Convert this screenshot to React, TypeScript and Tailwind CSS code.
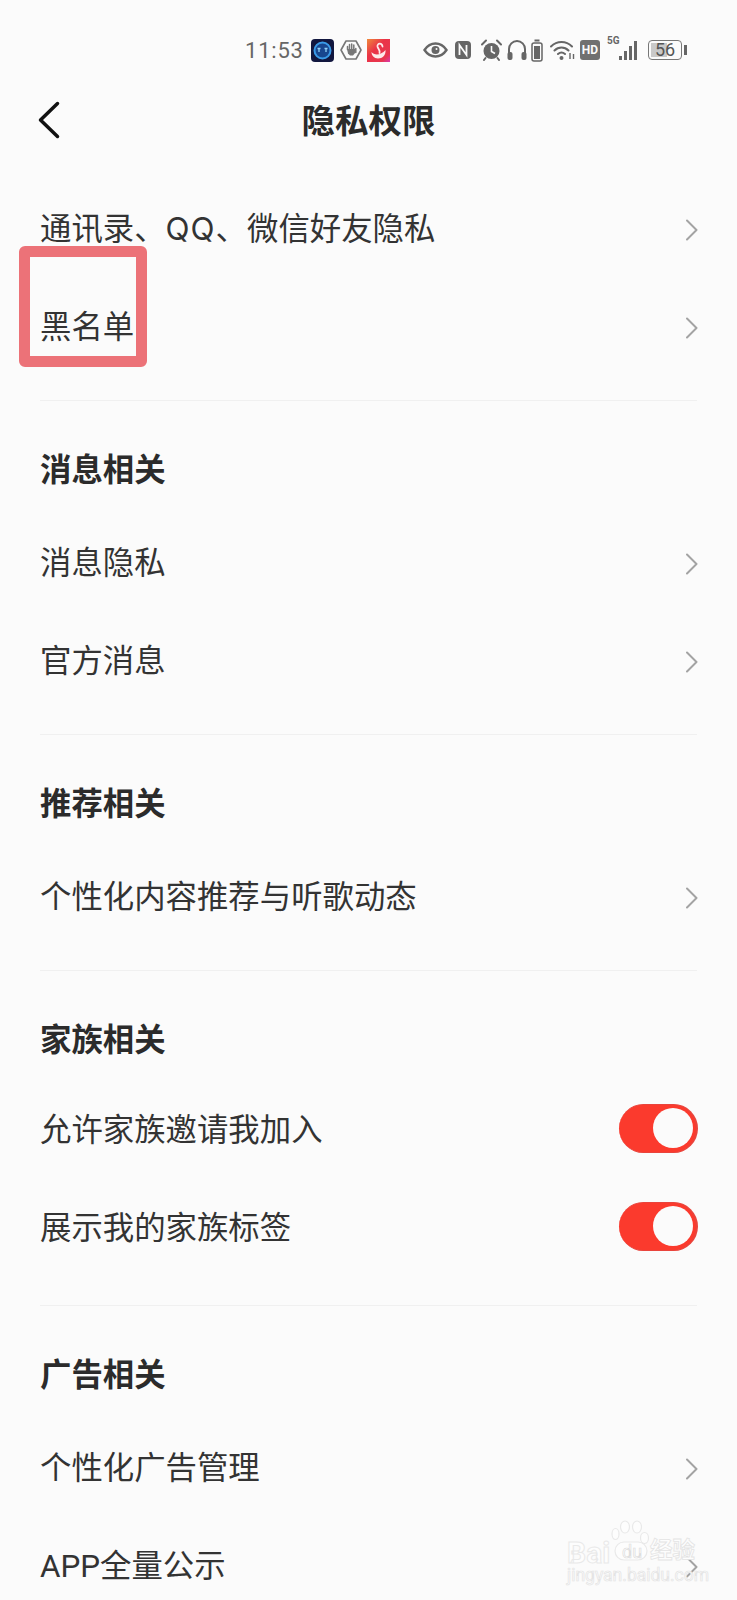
import React from 'react';

interface Row { label: string; toggle?: boolean; }
interface Section { title: string; compact?: boolean; rows: Row[]; }

const sections: Section[] = [
  { title: '', rows: [{ label: '通讯录、QQ、微信好友隐私' }, { label: '黑名单' }] },
  { title: '消息相关', rows: [{ label: '消息隐私' }, { label: '官方消息' }] },
  { title: '推荐相关', rows: [{ label: '个性化内容推荐与听歌动态' }] },
  { title: '家族相关', compact: true, rows: [{ label: '允许家族邀请我加入', toggle: true }, { label: '展示我的家族标签', toggle: true }] },
  { title: '广告相关', rows: [{ label: '个性化广告管理' }, { label: 'APP全量公示' }] },
];

function Chevron() {
  return (
    <svg width="12" height="22" viewBox="0 0 12 22" fill="none">
      <path d="M1 1.500 L10.500 11 L1 20.500" stroke="#a3a3a3" strokeWidth="2" strokeLinecap="round" strokeLinejoin="round" />
    </svg>
  );
}

function Toggle() {
  return (
    <div className="w-[79px] h-[49px] rounded-full bg-[#fb3a2d] border-r-[2px] border-y border-[#e9443c] flex items-center justify-end pr-[3px]">
      <div className="w-[40px] h-[40px] rounded-full bg-[#fbfbfb]" />
    </div>
  );
}

function RowLabel({ label }: { label: string }) {
  if (label.includes('QQ')) {
    const [before, after] = label.split('QQ');
    return (
      <>
        {before}
        <span className="tracking-[1px]" style={{ fontFamily: 'Inter, sans-serif' }}>QQ</span>
        {after}
      </>
    );
  }
  return <>{label}</>;
}

function StatusBar() {
  return (
    <div className="h-[78px] pl-[245px] pt-[22px] flex items-center text-[#666666]">
      <span className="text-[22px] tracking-[0.8px] w-[66px] leading-none mt-[1px]" style={{ fontFamily: 'Roboto, sans-serif' }}>11:53</span>
      {/* app icons */}
      <svg width="23" height="23" viewBox="0 0 23 23" className="mr-[6px]">
        <rect width="23" height="23" rx="4" fill="#12173f" />
        <circle cx="11.500" cy="11.500" r="8" fill="#18468f" stroke="#3a9ae8" strokeWidth="2" />
        <path d="M8 10v3M15 10v3M6.500 9.500h3M13.500 9.500h3" stroke="#8fd0f8" strokeWidth="1.300" />
      </svg>
      <svg width="22" height="22" viewBox="0 0 22 22" className="mr-[5px]">
        <path d="M6 2h10l5 9-5 9H6l-5-9z" fill="none" stroke="#777777" strokeWidth="1.600" strokeLinejoin="round" />
        <path d="M7.500 10.500V7.500M9.500 10V5.500M11.700 10V5M13.800 10V6M15.800 13.500V9.500" fill="none" stroke="#777777" strokeWidth="1.500" strokeLinecap="round" />
        <path d="M7 10h8.500v3.500L13 16.500h-3L8 14.500z" fill="#777777" />
      </svg>
      <svg width="23" height="23" viewBox="0 0 23 23" className="mr-[33px]">
        <defs>
          <linearGradient id="swan" x1="0" y1="0" x2="1" y2="1">
            <stop offset="0" stopColor="#ef8a3c" />
            <stop offset="0.4" stopColor="#ea3347" />
            <stop offset="0.8" stopColor="#e8364f" />
            <stop offset="1" stopColor="#d83bb0" />
          </linearGradient>
        </defs>
        <rect width="23" height="23" fill="url(#swan)" />
        <path d="M15.500 7.500C15 3.500 10 4 10.500 7.500C11 10 13.500 11 12.500 14" fill="none" stroke="#fdeaea" strokeWidth="1.800" strokeLinecap="round" />
        <path d="M4.500 13C7 16.500 14 16.500 18.500 11C19 16 15.500 19.500 11 19.500C7 19.500 4.500 16.500 4.500 13z" fill="#fdeaea" />
      </svg>
      {/* eye */}
      <svg width="25" height="18" viewBox="0 0 25 18" className="mr-[6px]">
        <path d="M1.500 9C4.500 4.500 8 2.500 12.500 2.500S20.500 4.500 23.500 9C20.500 13.500 17 15.500 12.500 15.500S4.500 13.500 1.500 9z" fill="none" stroke="#666666" strokeWidth="2.400" />
        <circle cx="12.500" cy="9" r="4" fill="#666666" />
        <circle cx="13.500" cy="8" r="1" fill="#fbfbfb" />
      </svg>
      {/* nfc */}
      <svg width="18" height="20" viewBox="0 0 18 20" className="mr-[9px]">
        <rect x="1" y="1" width="16" height="18" rx="4" fill="#666666" />
        <path d="M5.500 15V5L12.500 15V5" fill="none" stroke="#fbfbfb" strokeWidth="1.800" />
      </svg>
      {/* alarm */}
      <svg width="21" height="22" viewBox="0 0 21 22" className="mr-[5px]">
        <circle cx="10.500" cy="12" r="8" fill="#666666" />
        <path d="M10.500 7v5.500l3.500 2" fill="none" stroke="#fbfbfb" strokeWidth="1.600" />
        <path d="M1 5.500 5 1.500M20 5.500 16 1.500M4.500 19 3 21M16.500 19 18 21" stroke="#666666" strokeWidth="2" strokeLinecap="round" />
      </svg>
      {/* headphones */}
      <svg width="20" height="22" viewBox="0 0 20 22" className="mr-[4px]">
        <path d="M2 15V10a8 8 0 0 1 16 0v5" fill="none" stroke="#666666" strokeWidth="2" />
        <rect x="0.500" y="13" width="5" height="8" rx="2" fill="#666666" />
        <rect x="14.500" y="13" width="5" height="8" rx="2" fill="#666666" />
      </svg>
      {/* charge case */}
      <svg width="12" height="23" viewBox="0 0 12 23" className="mr-[7px]">
        <rect x="3.500" y="0.500" width="5" height="2" fill="#666666" />
        <rect x="1" y="4" width="10" height="18" rx="2" fill="none" stroke="#666666" strokeWidth="1.500" />
        <rect x="3" y="7" width="6" height="13" fill="#666666" />
      </svg>
      {/* wifi */}
      <svg width="25" height="22" viewBox="0 0 25 22" className="mr-[5px]">
        <path d="M1 7.500C7 1.500 16 1.500 22 7.500M4.500 11.500C8.500 7.500 14.500 7.500 18.500 11.500M8 15c2.500-2.200 4.500-2.200 7 0" fill="none" stroke="#666666" strokeWidth="2" strokeLinecap="round" />
        <circle cx="11.500" cy="19" r="2" fill="#666666" />
        <path d="M20 14v6M23.500 15v5" stroke="#666666" strokeWidth="1.400" />
      </svg>
      {/* HD */}
      <div className="w-[20px] h-[20px] rounded-[3px] bg-[#707070] text-[#fbfbfb] text-[12px] font-bold leading-[20px] text-center mr-[7px]" style={{ fontFamily: 'Roboto, sans-serif' }}>HD</div>
      {/* 5G signal */}
      <div className="relative w-[33px] h-[24px] mr-[8px]">
        <span className="absolute left-0 top-[-2px] text-[10px] font-bold text-[#666666] leading-none" style={{ fontFamily: 'Roboto, sans-serif' }}>5G</span>
        <svg width="33" height="24" viewBox="0 0 33 24" className="absolute left-0 top-0">
          <rect x="12" y="18" width="3" height="4" fill="#666666" />
          <rect x="17" y="13" width="3" height="9" fill="#666666" />
          <rect x="22" y="8" width="3" height="14" fill="#666666" />
          <rect x="27" y="3" width="3" height="19" fill="#666666" />
        </svg>
      </div>
      {/* battery */}
      <div className="relative w-[34px] h-[20px] rounded-[4px] border-[1.500px] border-[#777777] flex items-center justify-center">
        <div className="absolute left-[2px] top-[2px] bottom-[2px] w-[16px] bg-[#c9c9c9]" />
        <span className="relative text-[18px] leading-none text-[#555555]" style={{ fontFamily: 'Roboto, sans-serif' }}>56</span>
      </div>
      <div className="w-[3px] h-[10px] ml-[2px] bg-[#666666]" />
    </div>
  );
}

export default function App() {
  return (
    <div className="relative w-[737px] h-[1600px] overflow-hidden bg-[#fbfbfb]" style={{ fontFamily: 'Roboto, "Noto Sans CJK SC", sans-serif' }}>
      <StatusBar />

      {/* Header */}
      <div className="relative h-[87px] flex items-center justify-center">
        <svg width="24" height="38" viewBox="0 0 24 38" fill="none" className="absolute left-[37px] top-[23px]">
          <path d="M20.500 2.500 L3.500 19 L20.500 35.500" stroke="#111111" strokeWidth="3.500" strokeLinecap="round" strokeLinejoin="round" />
        </svg>
        <span className="text-[33.500px] font-bold text-[#2b2b2b] leading-none">隐私权限</span>
      </div>

      {/* Lista */}
      <div className="mt-[16px]">
        {sections.map((section, i) => (
          <div key={i}>
            {i > 0 && <div className="mx-[40px] mt-[23px] border-t border-[#f0f0f0]" />}
            {section.title && (
              <div className="px-[40px] pt-[46px] pb-[21px] h-[114px] text-[31.400px] leading-[47px] font-bold text-[#2b2b2b]">{section.title}</div>
            )}
            <div className={section.compact ? '-mt-[6px] pb-[7px]' : ''}>
              {section.rows.map(row => (
                <div key={row.label} className="h-[98px] pl-[40px] pr-[39px] flex items-center justify-between">
                  <span className={`text-[31.400px] leading-none text-[#333333] ${row.toggle ? 'mt-[5px]' : ''}`}><RowLabel label={row.label} /></span>
                  {row.toggle ? <Toggle /> : <Chevron />}
                </div>
              ))}
            </div>
          </div>
        ))}
      </div>

      {/* Destaque */}
      <div className="absolute left-[19px] top-[246px] w-[128px] h-[121px] rounded-[6px] border-[11.500px] border-[#ec7278]" />

      {/* Marca d'agua */}
      <div className="absolute left-[565px] top-[1520px] w-[170px] h-[80px] pointer-events-none">
        <svg width="40" height="44" viewBox="0 0 40 44" className="absolute left-[45px] top-0">
          <g fill="#fdfdfd" stroke="#e9e9e9" strokeWidth="1.200">
            <ellipse cx="5.500" cy="14" rx="3.500" ry="5.500" />
            <ellipse cx="15" cy="7" rx="4.500" ry="6" />
            <ellipse cx="27" cy="7" rx="4.500" ry="6" />
            <ellipse cx="34.500" cy="18" rx="4" ry="5.500" />
            <rect x="5" y="22" width="32" height="18" rx="9" />
          </g>
        </svg>
        <span className="absolute left-[2px] top-[20px] text-[30px] font-bold leading-[26px] text-[#fdfdfd] [-webkit-text-stroke:1px_#e9e9e9]">Bai</span>
        <span className="absolute left-[57px] top-[23px] text-[18px] leading-none text-[#fdfdfd] [-webkit-text-stroke:0.7px_#dedede]">du</span>
        <span className="absolute left-[85px] top-[19px] text-[22.500px] font-bold leading-none text-[#fdfdfd] [-webkit-text-stroke:0.8px_#e4e4e4]">经验</span>
        <span className="absolute left-[2px] top-[47px] text-[17.500px] leading-none text-[#fdfdfd] [-webkit-text-stroke:0.7px_#e4e4e4]">jingyan.baidu.com</span>
      </div>
    </div>
  );
}
